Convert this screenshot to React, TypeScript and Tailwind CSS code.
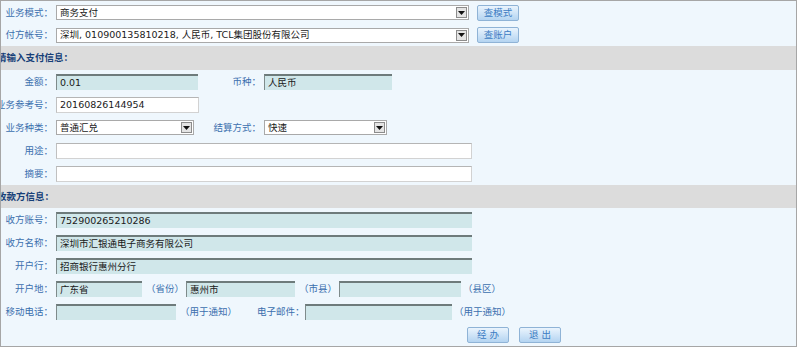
import React from 'react';

// shared text style for the whole form
const font = "font-[family-name:'DejaVu_Sans','Noto_Sans_CJK_SC',sans-serif]";

const Label: React.FC<{ text: string; w?: string }> = ({ text, w = 'w-[55px]' }) => (
  <div className={`${w} shrink-0 flex justify-end pr-[3px] whitespace-nowrap text-[#3b6fae]`}>{text}</div>
);

const TealInput: React.FC<{ value?: string; w: string }> = ({ value = '', w }) => (
  <div
    className={`${w} h-[16px] shrink-0 flex items-center pl-[3px] bg-[#d0e7ea] border-t-2 border-t-[#6e7b7b] border-l border-l-[#7f8b8b] text-[#1a1a1a] whitespace-nowrap overflow-hidden`}
  >
    {value}
  </div>
);

const WhiteInput: React.FC<{ value?: string; w: string }> = ({ value = '', w }) => (
  <div
    className={`${w} h-[16px] shrink-0 flex items-center pl-[3px] bg-white border border-[#d2d2d2] border-t-[#b5b5b5] border-l-[#c0c0c0] text-[#1a1a1a] whitespace-nowrap overflow-hidden`}
  >
    {value}
  </div>
);

const Select: React.FC<{ value: string; w: string }> = ({ value, w }) => (
  <div
    className={`${w} h-[15px] shrink-0 flex items-center justify-between pl-[3px] pr-[1px] bg-white border border-[#a9a9a9] text-[#1a1a1a] whitespace-nowrap overflow-hidden`}
  >
    <span>{value}</span>
    <span className="w-[11px] h-[11px] flex items-center justify-center bg-[#e4e4e4] border border-[#8c8c8c]">
      <svg width="7" height="4" viewBox="0 0 7 4">
        <path d="M0 0H7L3.5 4Z" fill="#111" />
      </svg>
    </span>
  </div>
);

const Btn: React.FC<{ text: string }> = ({ text }) => (
  <div className="w-[42px] h-[16px] shrink-0 flex items-center justify-center rounded-[2px] border border-[#8fb3d6] bg-gradient-to-b from-[#eaf4fd] to-[#b4d4f1] text-[#3c7cc3] text-[9.5px] whitespace-pre">
    {text}
  </div>
);

const Note: React.FC<{ text: string; w?: string; pl?: string }> = ({ text, w = '', pl = 'pl-[4px]' }) => (
  <div className={`${w} ${pl} shrink-0 whitespace-nowrap text-[#3b6fae]`}>{text}</div>
);

const Band: React.FC<{ text: string; h: string }> = ({ text, h }) => (
  <div className={`${h} flex items-center bg-[#dcdcdc]`}>
    <span className="-ml-[4px] font-bold text-[#163f78] whitespace-nowrap">{text}</span>
  </div>
);

export default function App() {
  return (
    <div
      className={`${font} w-[797px] h-[347px] overflow-hidden border border-[#a6a6a6] bg-[#eff7fd] text-[9.5px] leading-none flex flex-col`}
    >
      <div className="h-[23px] flex items-center">
        <Label text="业务模式：" />
        <Select value="商务支付" w="w-[413px]" />
        <div className="w-[8px] shrink-0" />
        <Btn text="查模式" />
      </div>
      <div className="h-[22px] flex items-center">
        <Label text="付方帐号：" />
        <Select value="深圳, 010900135810218, 人民币, TCL集团股份有限公司" w="w-[413px]" />
        <div className="w-[8px] shrink-0" />
        <Btn text="查账户" />
      </div>

      <Band text="请输入支付信息：" h="h-[24px]" />

      <div className="h-[23px] flex items-center">
        <Label text="金额：" />
        <TealInput value="0.01" w="w-[142px]" />
        <Label text="币种：" w="w-[66px]" />
        <TealInput value="人民币" w="w-[128px]" />
      </div>
      <div className="h-[23px] flex items-center">
        <Label text="业务参考号：" />
        <WhiteInput value="20160826144954" w="w-[143px]" />
      </div>
      <div className="h-[23px] flex items-center">
        <Label text="业务种类：" />
        <Select value="普通汇兑" w="w-[138px]" />
        <Label text="结算方式：" w="w-[70px]" />
        <Select value="快速" w="w-[123px]" />
      </div>
      <div className="h-[23px] flex items-center">
        <Label text="用途：" />
        <WhiteInput w="w-[416px]" />
      </div>
      <div className="h-[23px] flex items-center">
        <Label text="摘要：" />
        <WhiteInput w="w-[416px]" />
      </div>

      <Band text="收款方信息：" h="h-[23px]" />

      <div className="h-[23px] flex items-center">
        <Label text="收方账号：" />
        <TealInput value="752900265210286" w="w-[416px]" />
      </div>
      <div className="h-[23px] flex items-center">
        <Label text="收方名称：" />
        <TealInput value="深圳市汇银通电子商务有限公司" w="w-[416px]" />
      </div>
      <div className="h-[23px] flex items-center">
        <Label text="开户行：" />
        <TealInput value="招商银行惠州分行" w="w-[416px]" />
      </div>
      <div className="h-[23px] flex items-center">
        <Label text="开户地：" />
        <TealInput value="广东省" w="w-[86px]" />
        <Note text="（省份）" w="w-[44px]" />
        <TealInput value="惠州市" w="w-[109px]" />
        <Note text="（市县）" w="w-[44px]" />
        <TealInput w="w-[122px]" />
        <Note text="（县区）" pl="pl-[2px]" />
      </div>
      <div className="h-[23px] flex items-center">
        <Label text="移动电话：" />
        <TealInput w="w-[120px]" />
        <Note text="（用于通知）" w="w-[81px]" />
        <div className="w-[48px] shrink-0 whitespace-nowrap text-[#3b6fae]">电子邮件：</div>
        <TealInput w="w-[147px]" />
        <Note text="（用于通知）" pl="pl-[2px]" />
      </div>
      <div className="h-[23px] flex items-center pl-[466px] gap-[10px]">
        <Btn text="经 办" />
        <Btn text="退 出" />
      </div>
    </div>
  );
}
